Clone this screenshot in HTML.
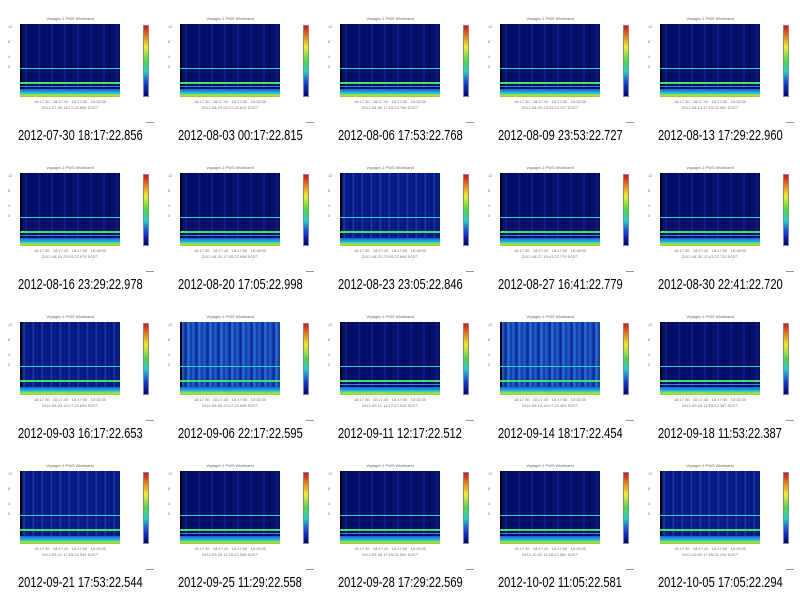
<!DOCTYPE html>
<html><head><meta charset="utf-8"><style>
body{margin:0;width:800px;height:596px;background:#fff;position:relative;overflow:hidden;font-family:"Liberation Sans",sans-serif}
.c{position:absolute;width:160px;height:149px}
.p{position:absolute;left:20px;top:24px;width:100px;height:73px;overflow:hidden;
background:
linear-gradient(#2ad4c4,#2ad4c4) 0 44px/100% 1px no-repeat,
linear-gradient(#3ee36a,#3ee36a) 0 58px/100% 2px no-repeat,
linear-gradient(#3a8ad0,#3a8ad0) 0 62px/100% 1px no-repeat,
linear-gradient(#1a60d0 0,#20a8e0 40%,#40d8b0 60%,#8af040 75%,#f0c020 85%,#50e060 100%) 0 65px/100% 8px no-repeat,
linear-gradient(#000,#000) 0 0/2px 100% no-repeat,
repeating-linear-gradient(90deg,#06106c 0,#06106c 5px,#102a98 6px,#06106c 7px,#040c60 13px),
#06106c}
.p.b{background:
linear-gradient(#2ad4c4,#2ad4c4) 0 44px/100% 1px no-repeat,
linear-gradient(#3ee36a,#3ee36a) 0 58px/100% 2px no-repeat,
linear-gradient(#1a60d0 0,#20a8e0 40%,#40d8b0 60%,#8af040 75%,#f0c020 85%,#50e060 100%) 0 65px/100% 8px no-repeat,
linear-gradient(#000,#000) 0 0/2px 100% no-repeat,
repeating-linear-gradient(90deg,#1030a0 0,#2464cc 2px,#1444b4 4px,#0a1e88 6px,#2a78d8 8px,#1238a8 11px),
#1030a0}
.p.m{background:
linear-gradient(#2ad4c4,#2ad4c4) 0 44px/100% 1px no-repeat,
linear-gradient(#3ee36a,#3ee36a) 0 58px/100% 2px no-repeat,
linear-gradient(#1a60d0 0,#20a8e0 40%,#40d8b0 60%,#8af040 75%,#f0c020 85%,#50e060 100%) 0 65px/100% 8px no-repeat,
linear-gradient(#000,#000) 0 0/2px 100% no-repeat,
repeating-linear-gradient(90deg,#081880 0,#081880 3px,#1844b0 4px,#081880 6px,#0c2090 9px),
#081880}
.cb{position:absolute;left:143px;top:25px;width:6px;height:72px;border:1px solid #888;box-sizing:border-box;
background:linear-gradient(#e01010,#f08010 15%,#f0f020 30%,#40e040 50%,#20d0d0 65%,#1040e0 82%,#00007a)}
.t{position:absolute;left:20px;top:16px;width:100px;text-align:center;font-size:4px;color:#666}
.yl{position:absolute;left:8px;top:24px;width:10px;height:73px;font-size:4px;color:#777}
.xl{position:absolute;left:20px;top:99px;width:100px;font-size:4px;color:#777;text-align:center;line-height:6px}
.cap{position:absolute;left:0;top:127px;width:300px;font-size:15px;color:#000;white-space:nowrap;transform-origin:0 0;transform:translateX(18px) scaleX(.74)}
.dash{position:absolute;left:146px;top:122px;width:8px;height:1px;background:#999}
</style></head><body>
<script>
var caps=["2012-07-30 18:17:22.856","2012-08-03 00:17:22.815","2012-08-06 17:53:22.768","2012-08-09 23:53:22.727","2012-08-13 17:29:22.960",
"2012-08-16 23:29:22.978","2012-08-20 17:05:22.998","2012-08-23 23:05:22.846","2012-08-27 16:41:22.779","2012-08-30 22:41:22.720",
"2012-09-03 16:17:22.653","2012-09-06 22:17:22.595","2012-09-11 12:17:22.512","2012-09-14 18:17:22.454","2012-09-18 11:53:22.387",
"2012-09-21 17:53:22.544","2012-09-25 11:29:22.558","2012-09-28 17:29:22.569","2012-10-02 11:05:22.581","2012-10-05 17:05:22.294"];
var cls={11:"b",13:"b",7:"m",19:"m",10:"m",15:"m"};
var h="";
for(var i=0;i<20;i++){var r=Math.floor(i/5),c=i%5;
h+='<div class="c" style="left:'+(c*160)+'px;top:'+(r*149)+'px">'+
'<div class="t">Voyager-1 PWS Wideband</div>'+
'<div class="yl">12<br><br><br>8<br><br><br>4<br><br>0</div>'+
'<div class="p '+(cls[i]||"")+'"></div>'+
'<div class="xl">18:17:30 &nbsp; 18:17:40 &nbsp; 18:17:50 &nbsp; 18:18:00<br>'+caps[i]+' SCET</div>'+
'<div class="cb"></div><div class="dash"></div>'+
'<div class="cap">'+caps[i]+'</div></div>';}
document.write(h);
</script>
</body></html>
